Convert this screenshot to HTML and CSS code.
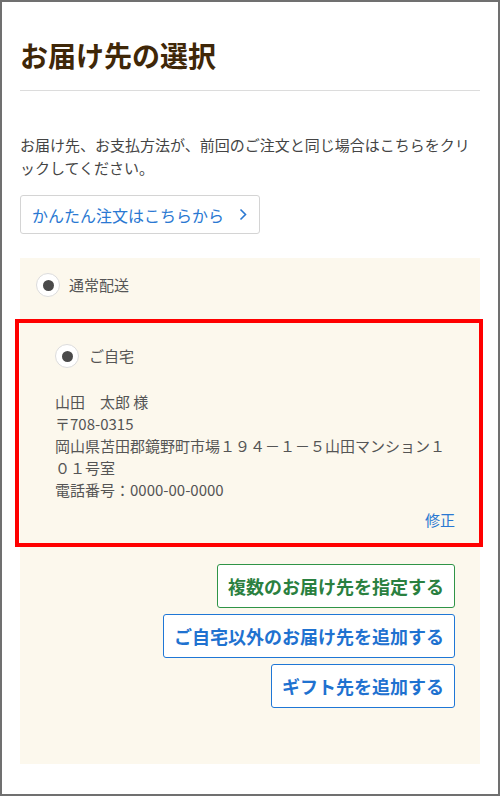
FILE: index.html
```html
<!DOCTYPE html>
<html lang="ja">
<head>
<meta charset="UTF-8">
<meta name="viewport" content="width=device-width, initial-scale=1.0">
<title>お届け先の選択</title>
<link rel="stylesheet" href="styles.css">
</head>
<body>

<div class="frame">
  <div class="header">
    <h1>お届け先の選択</h1>
  </div>

  <p class="lead">お届け先、お支払方法が、前回のご注文と同じ場合はこちらをクリックしてください。</p>

  <a class="quick-btn" href="#">かんたん注文はこちらから
    <svg width="8" height="13" viewBox="0 0 8 13"><path d="M1.5 1.5 L6.5 6.5 L1.5 11.5" fill="none" stroke="#2a78d2" stroke-width="1.6"/></svg>
  </a>

  <div class="panel">
    <div class="option">
      <span class="radio"></span>
      <span class="option-label">通常配送</span>
    </div>

    <div class="selected">
      <div class="option">
        <span class="radio"></span>
        <span class="option-label">ご自宅</span>
      </div>
      <div class="address">
        山田　太郎 様<br>
        〒708-0315<br>
        岡山県苫田郡鏡野町市場１９４－１－５山田マンション１０１号室<br>
        電話番号：0000-00-0000
      </div>
      <div class="edit"><a href="#">修正</a></div>
    </div>

    <div class="actions">
      <a class="act-btn green" href="#">複数のお届け先を指定する</a>
      <a class="act-btn" href="#">ご自宅以外のお届け先を追加する</a>
      <a class="act-btn" href="#">ギフト先を追加する</a>
    </div>
  </div>
</div>

</body>
</html>
```

FILE: styles.css
```css
* {
  box-sizing: border-box;
  font-family: "Noto Sans CJK JP", "Noto Sans", sans-serif;
}
body {
  margin: 0;
  background: white;
  overflow: hidden;
}
a { text-decoration: none; }

.frame {
  width: 500px;
  height: 796px;
  border: 2px solid #707070;
  padding: 0 18px;
}

.header {
  padding: 33px 0 15px;
  border-bottom: 1px solid #dcdcdc;
}
h1 {
  margin: 0;
  font-size: 28px;
  line-height: 40px;
  font-weight: bold;
  color: #3f2708;
}

.lead {
  margin: 43px 0 0;
  font-size: 15px;
  line-height: 22.5px;
  color: #444;
}

.quick-btn {
  margin-top: 16px;
  display: inline-flex;
  align-items: center;
  gap: 15px;
  height: 39px;
  padding: 0 12px 0 11px;
  border: 1px solid #d4d4d4;
  border-radius: 3px;
  font-size: 16px;
  color: #2a78d2;
}

.panel {
  margin-top: 24px;
  background: #fcf8ed;
  padding: 15px 0 56px;
}

.option {
  display: flex;
  align-items: center;
  gap: 9px;
  padding-left: 16px;
}
.radio {
  width: 24px;
  height: 24px;
  border-radius: 50%;
  background: white;
  border: 1px solid #dcdcdc;
  display: flex;
  align-items: center;
  justify-content: center;
}
.radio::after {
  content: "";
  width: 11px;
  height: 11px;
  border-radius: 50%;
  background: #4a4a4a;
}
.option-label {
  font-size: 15px;
  line-height: 22px;
  color: #555;
}

/* highlighted address card */
.selected {
  margin: 22px -3px 0 -5px;
  border: 4px solid #f00;
  padding: 21px 24px 12px 36px;
}
.selected .option { padding-left: 0; gap: 10px; }
.address {
  margin-top: 23px;
  font-size: 15px;
  line-height: 22px;
  color: #555;
}
.edit {
  margin-top: 8px;
  text-align: right;
  font-size: 15px;
  line-height: 22px;
}
.edit a { color: #2a78d2; }

.actions {
  margin-top: 17px;
  padding-right: 25px;
  display: flex;
  flex-direction: column;
  align-items: flex-end;
  gap: 6px;
}
.act-btn {
  display: inline-flex;
  align-items: center;
  height: 44px;
  padding: 0 10px;
  border: 1px solid #1f77d6;
  border-radius: 3px;
  background: white;
  font-size: 18px;
  font-weight: bold;
  color: #1f72d0;
}
.act-btn.green {
  border-color: #2f9447;
  color: #2a8040;
}
```
